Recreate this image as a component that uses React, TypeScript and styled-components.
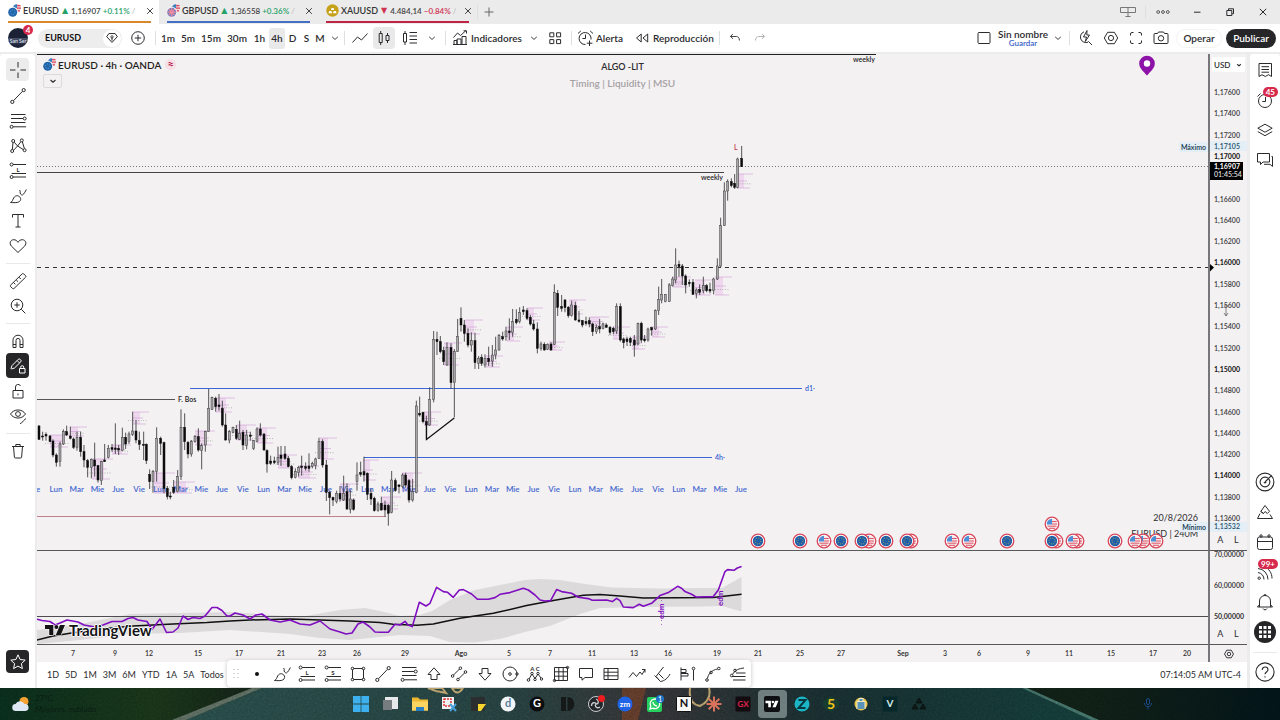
import React from 'react';
import styled, { createGlobalStyle, css } from 'styled-components';

const ui = `Lato, 'Open Sans', sans-serif`;
const ink = '#2b2b2e';

const Global = createGlobalStyle`
  *, *::before, *::after { box-sizing: border-box; }
  html, body, #root { margin: 0; height: 100%; }
  body { font-family: ${ui}; font-size: 10px; line-height: 12px; color: ${ink}; background: #f4f1f2; overflow: hidden; }
  button, select { font: inherit; color: inherit; border: 0; background: none; padding: 0; margin: 0; cursor: pointer; }
  svg { display: block; flex: none; }
  svg text { font-family: ${ui}; }
`;

/* ---------- icons: 18px grid, one-pixel strokes ---------- */

const o = (x: number, y: number, r: number) =>
  `M${x - r} ${y}a${r} ${r} 0 1 0 ${r * 2} 0a${r} ${r} 0 1 0 ${-r * 2} 0`;

const paths: Record<string, string> = {
  cross: 'M9 1v5.5M9 11.5V17M1 9h5.5M11.5 9H17',
  trend: `M4.5 13.7 13.5 4.3${o(3.3, 14.9, 1.6)}${o(14.7, 3.1, 1.6)}`,
  fib: `M2 2.5h14.500M2 6.500h12M2 10.500h14.500M4.200 14.800H17${o(15.7, 6.5, 1.5)}${o(2.6, 14.8, 1.5)}`,
  xabcd: `M3.300 12.500 4 5.500M5.200 5.200 8.600 9 11.800 4.800M13.400 5l2 6.600M4.700 13 8.600 9l5.800 3.600${o(4.2, 4, 1.5)}${o(12.8, 3.4, 1.5)}${o(3.2, 14, 1.5)}${o(15.6, 13.2, 1.5)}`,
  posFrame: `M4.200 2.500H17M2.600 11.500H17M4.200 15H17${o(2.6, 2.5, 1.5)}${o(2.6, 15, 1.5)}`,
  brush: 'M1.500 15.500c2-.7 2.300-3 3.300-4.800C6 8.700 8.700 8 10.500 9.700s1.400 4.100-.6 5.200c-1.900 1-5.400.8-8.400.6zM11.200 4.500c-.4 2 .6 3.600 2.300 3.400C15.200 7 16.300 4.500 17.300 2.500M11.200 4.500l-.5-1.500',
  text: 'M3.500 5.500v-3h11v3M9 2.500v12.500M6.500 15h5',
  heart: 'M9 15.500 2.300 9C-.2 6.300 1.600 2.700 4.700 2.700c1.900 0 3.400 1 4.300 2.700.9-1.700 2.400-2.700 4.300-2.700 3.100 0 4.900 3.600 2.400 6.300z',
  ruler: 'm1.500 13.200 11.700-11.400a1 1 0 0 1 1.400 0l2 2a1 1 0 0 1 0 1.400L5 16.500a1 1 0 0 1-1.400 0l-2.100-2a1 1 0 0 1 0-1.300zM4.500 10.500l1.800 1.800M7.200 7.900l1.800 1.800M10 5.200l1.800 1.800',
  zoom: `${o(8, 8, 5.8)}M12.300 12.300l4 4M5.300 8h5.400M8 5.300v5.400`,
  magnet: 'M4 15.500V8.200a5 5 0 0 1 10 0v7.300h-3V8.400a2 2 0 0 0-4 0v7.100zM4 12.500h3M11 12.500h3',
  pencilLock: 'M2 11.500 3 8.600 9.300 2.300a1.300 1.300 0 0 1 1.800 0l.7.700a1.300 1.300 0 0 1 0 1.800L5.500 11l-3 1zM10.500 11.500h5.500v4.500h-5.500zM11.700 11.500v-1.300a1.500 1.500 0 0 1 3 0v1.300M8.200 3.600l2.400 2.400',
  unlock: 'M4 8.500h10v7.500H4zM6.500 8.500V5a2.600 2.600 0 0 1 5-1M9 11.500v1.800',
  eye: `M1.500 7C5 1.600 13 1.600 16.500 7 13 12.400 5 12.400 1.500 7z${o(9, 7, 2.4)}M11 16.500c2.500 0 2-2.500 3.500-2.500M14.500 13.700l2.500-2.200`,
  trash: 'M3 4.500h12M6.800 4.500V2.500h4.400v2M4.500 4.500l.9 10.600a1 1 0 0 0 1 .9h5.200a1 1 0 0 0 1-.9l.9-10.600',
  star: 'm9 1.800 2.100 4.700 5.100.6-3.800 3.500 1 5L9 13.100l-4.400 2.500 1-5L1.800 7.100l5.100-.6z',
  chev: 'm5.800 7.700 3.200 2.900 3.200-2.900',
  plusCircle: `${o(9, 9, 6.3)}M9 5.800v6.400M5.800 9h6.400`,
  plus: 'M9 4.500v9M4.500 9h9',
  close: 'm5.800 5.800 6.400 6.400M12.200 5.800l-6.400 6.400',
  line: 'M1.500 13.500 6.500 8l4 3L16.500 4.500',
  candles: 'M4.200 4.500h3v9h-3zM5.700 2v2.500M5.700 13.500V16M11 6.500h3v5h-3zM12.500 4v2.500M12.500 11.500V14',
  candleList: 'M2.500 4.500h3v8.500h-3zM4 2v2.500M4 13v3M8.500 3.500h7.500M8.500 7h7.500M8.500 10.500h7.500M8.500 14h7.500',
  indicators: 'M3 15.500v-4h3v4M6 15.500v-5.500h4v5.500M11 15.500v-8h4v8M2 15.500h14M2.500 8.500l4-4.500 3 2.500 5.500-5M12.500 1.800h3v2.700',
  grid4: 'M3.800 3.800h4v4h-4zM10.600 3.800h4v4h-4zM3.800 10.600h4v4h-4zM10.600 10.600h4v4h-4z',
  alarm: 'M9.500 15.500a6 6 0 1 1 5.500-5M9.500 5.500v4h-3M2 4.500 4.800 2M17 4.500 14.200 2M13.500 11.500v5.500M10.800 14.200h5.600',
  rewind: 'M8.200 5v8L3.500 9zM14.700 5v8L10 9z',
  undo: 'M6.500 4.500 4 7.300l2.800 2.700M4 7.300h6.500c2 0 3.500 1.500 3.500 4.500',
  redo: 'M11.500 4.500 14 7.300l-2.800 2.700M14 7.300H7.500c-2 0-3.500 1.500-3.500 4.500',
  square: 'M4 3.500h10a1 1 0 0 1 1 1v9a1 1 0 0 1-1 1H4a1 1 0 0 1-1-1v-9a1 1 0 0 1 1-1z',
  search: 'M12 13.200a5.500 5.500 0 1 1-4-10.400M12.300 12.300l3.700 3.700M11 1.500 7.500 8h3l-1.200 4.500L13.500 6H10.800z',
  hexGear: `M5.600 3.300h6.800L15.700 9l-3.300 5.700H5.600L2.300 9z${o(9, 9, 2.6)}`,
  full: 'M3.500 6.500V5a1.500 1.500 0 0 1 1.500-1.500h1.500M11.500 3.500H13A1.500 1.500 0 0 1 14.500 5v1.500M14.500 11.500V13a1.500 1.500 0 0 1-1.500 1.500h-1.500M6.500 14.500H5A1.500 1.500 0 0 1 3.500 13v-1.500',
  camera: `M3 4.500h2.500l1-1.500h5l1 1.500H15a1 1 0 0 1 1 1v8a1 1 0 0 1-1 1H3a1 1 0 0 1-1-1v-8a1 1 0 0 1 1-1z${o(9, 9.3, 2.7)}`,
  gem: 'M5.500 4h7L15 7.500 9 14 3 7.500zM9 6.200l1.500 1.600L9 9.400 7.500 7.800zM9 9v3',
  panels: 'M1.500 4.500h15v5h-15zM9 4.500v9M6.500 13.500h5',
  dots3: `${o(4.2, 9, 1.4)}${o(9, 9, 1.4)}${o(13.8, 9, 1.4)}`,
  minus: 'M6 9.200h6.500',
  restore: 'M5.800 7.500h5v5h-5zM7.500 7.200V5.800h5v5h-1.400',
  bookList: 'M3 2.500h12.500v13l-3-1.800-3.200 1.800-3.300-1.800-3 1.800zM5.500 5.700h7.500M5.500 8.500h7.500M5.500 11.200h7.500',
  clock: `${o(9, 10, 6.5)}M9.500 6v4.500H6.300M1.500 5.500 4.500 2.500`,
  layers: 'M9 3.200 16.200 7.200 9 11.200 1.800 7.200zM1.800 10.600 9 14.700l7.200-4.100',
  chat: 'M1.500 2.500h12v8.500H7l-2.500 2.500V11h-3zM15.500 5.500h1v10l-2.500-2.200H8',
  radar: `${o(9, 9, 8)}${o(9, 9, 4.4)}M9 9l5.500-5.500M8.200 9a.8.8 0 1 0 1.600 0`,
  idea: 'M4.800 8.500 9 2.500l4.500 5.800-2.200 2.200L9 8.500l-1.500 2zM4 10.500 1.500 15.500h15L14 11.500M4.800 8.500l2.700 2',
  calendar: `M3.500 4h11a2 2 0 0 1 2 2v8.500a2 2 0 0 1-2 2h-11a2 2 0 0 1-2-2V6a2 2 0 0 1 2-2zM1.500 8.500h15${o(5, 3, 1.2)}${o(13, 3, 1.2)}`,
  feed: `M2 9.500a7 7 0 0 1 6 7M2 5.500a11 11 0 0 1 10 11M8 3.500c5 2 8 6.500 8 12${o(3.2, 15.2, 1.2)}`,
  bell: 'M1.500 14h15M3.500 14V8a5.500 5.500 0 0 1 11 0v6M1.500 14l2-2.500M16.500 14l-2-2.500M7 15.500c.8 1.800 3.200 1.800 4 0M8 2.500c0-1.500 2-1.500 2 0',
  help: `${o(9, 9, 8.2)}M6.500 7.200C6.500 3.500 11.700 3.800 11.700 7c0 2-2.700 2-2.700 4M9 12.800v1.200`,
  rect: `M4.500 3.500h9M4.500 14.500h9M3.500 4.500v9M14.500 4.500v9${o(3.5, 3.5, 1.3)}${o(14.5, 3.5, 1.3)}${o(3.5, 14.5, 1.3)}${o(14.5, 14.5, 1.3)}`,
  up: 'm9 2.800 6 6.700h-3v5H6v-5H3z',
  down: 'm9 15.200 6-6.700h-3v-5H6v5H3z',
  parallel: `M3.500 10 9.500 4M9 13.500 14.500 8${o(2.6, 11, 1.3)}${o(10.4, 3.2, 1.3)}${o(8, 14.500, 1.3)}${o(15.5, 7, 1.3)}`,
  circle: `${o(9, 9, 7)}${o(9, 9, 1.3)}${o(16, 9, 1.2)}`,
  abc: `M3 14 6 9l3 4.500L12 9l3 4${o(2.5, 15, 1.3)}${o(6, 8.5, 1.200)}${o(9, 14.500, 1.2)}${o(12, 8.5, 1.2)}${o(15.500, 14, 1.200)}`,
  gridBox: `M2.500 2.500h13v13h-13zM6.800 2.500v13M11.200 2.500v13M2.500 6.800h13M2.500 11.200h13${o(2.5, 15.5, 1.2)}${o(15.5, 2.5, 1.2)}`,
  comment: 'M2.500 3.500h13v9H8l-3 2.700v-2.700H2.500z',
  table: 'M2 3.500h14v11H2zM6 3.500v11M2 7.200h14M2 10.800h14',
  zig: 'M1 12.500 5 7.500l3.500 4L12 7l2 2.500L17 4.500M14 4.500h3v3',
  fan: 'M3 11.500 10.500 2M1.500 10.500l6 6c4-.5 7.500-3.500 9.500-7.500M5.500 8.500l5 5M3 11.500l3.500 4',
  profile: `M2 2.500v13M2 4.500h5v3H2M2 8.500h7v2.500H2M14.500 5v10.500${o(14.5, 3.5, 1.3)}`,
  curve: `M3.500 13.500C4 9 8 5 13.500 4${o(3, 15, 1.3)}${o(14.800, 3.500, 1.3)}${o(7, 7.5, 1.3)}`,
  pitch: `M3.500 9.500C6 5 10 3.500 15 3M3 11.500h13.500M4 15h12.500M7 8h9.500${o(2.7, 10.500, 1.3)}${o(6, 5.5, 1.300)}`,
};

type GlyphProps = { name: string; size?: number; w?: number; letter?: string; letterY?: number };
const Glyph = ({ name, size = 18, w = 1, letter, letterY = 9.5 }: GlyphProps) => (
  <svg width={size} height={size} viewBox="0 0 18 18" fill="none" stroke="currentColor" strokeWidth={w} strokeLinejoin="round" aria-hidden="true">
    <path d={paths[name]} />
    {letter && (
      <text x="9" y={letterY} fontSize="6" fontWeight="700" textAnchor="middle" fill="currentColor" stroke="none">{letter}</text>
    )}
  </svg>
);

const Flag = ({ kind }: { kind: 'eu' | 'gb' | 'xau' }) => (
  <svg width="13" height="13" viewBox="0 0 13 13" aria-hidden="true">
    {kind === 'xau' ? (
      <>
        <circle cx="6.500" cy="6.500" r="6.200" fill="#c6a21c" />
        <path d="M5 6l.6-2h2l.6 2zM2.500 9.300l.7-2.300h2.200l.7 2.300zM7 9.300 7.700 7h2.200l.7 2.300z" fill="#fff" />
      </>
    ) : (
      <>
        <circle cx="9" cy="4" r="3.900" fill="#f3d4da" />
        <path d="M8.500 1.600h4M8.500 4.200h4.500M9 6.800h3" stroke="#d94a5e" strokeWidth="1.200" />
        <path d="M9 .2A3.900 3.900 0 0 0 5.100 4H9z" fill="#3b82c4" />
        <circle cx="4.900" cy="8" r="5" fill="#fff" />
        <circle cx="4.700" cy="8.200" r="4.500" fill={kind === 'eu' ? '#2166ac' : '#6d7fc2'} />
        {kind === 'eu' ? (
          <circle cx="4.700" cy="8.200" r="2.300" fill="none" stroke="#5fa3cf" strokeDasharray="1 1.200" />
        ) : (
          <path d="M4.700 3.700v9M.2 8.200h9M1.700 5.200l6 6M7.700 5.200l-6 6" stroke="#f08a9c" strokeWidth="1.200" />
        )}
      </>
    )}
  </svg>
);

/* ---------- window frame ---------- */

const Page = styled.div`display: flex; flex-direction: column; height: 100vh; min-height: 640px;`;

const TabStrip = styled.header`display: flex; align-items: stretch; height: 24px; background: #ebebeb; flex: none;`;
const Tab = styled.div<{ $active?: boolean }>`
  width: 159px; padding: 0 8px; display: flex; background: ${p => (p.$active ? '#fff' : 'transparent')};
`;
const TabInner = styled.div<{ $line: string }>`
  flex: 1; min-width: 0; display: flex; align-items: center; gap: 2px; border-bottom: 2px solid ${p => p.$line}; margin-bottom: 1px;
`;
const TabName = styled.a`color: #333; text-decoration: none; font-weight: 600; white-space: nowrap; font-size: 9px;`;
const Quote = styled.span<{ $c: string }>`color: ${p => p.$c}; font-weight: 600; white-space: nowrap; font-size: 8px;`;
const Arrow = styled.span<{ $c: string }>`color: ${p => p.$c}; font-size: 8px; font-family: 'DejaVu Sans', sans-serif; padding: 0 1px;`;
const IconButton = styled.button<{ $w: number; $h?: number; $bg?: string; $c?: string }>`
  flex: none; width: ${p => p.$w}px; height: ${p => p.$h ?? 24}px; display: flex; align-items: center; justify-content: center;
  color: ${p => p.$c ?? 'inherit'}; border-radius: 4px; background: ${p => p.$bg ?? 'transparent'};
`;
const TabClose = styled(IconButton)`margin-left: auto; margin-right: -7px;`;
const Spacer = styled.div`flex: 1;`;
const Divider = styled.div<{ $m?: number }>`width: 1px; height: 14px; background: #dfdfe2; margin: 0 ${p => p.$m ?? 0}px; flex: none; align-self: center;`;

const Toolbar = styled.nav`display: flex; align-items: center; height: 28px; background: #fff; flex: none; font-weight: 600; padding-right: 4px;`;
const Avatar = styled.button`
  position: relative; width: 20px; height: 20px; margin: 0 10px 0 8px; border-radius: 10px; flex: none;
  background: linear-gradient(#1c2236 50%, #4a5068 52%, #1a2036 90%); color: #dfe3f2; font-size: 5px; line-height: 8px; padding-top: 5px; white-space: nowrap;
`;
const Badge = styled.span<{ $wide?: boolean }>`
  position: absolute; top: ${p => (p.$wide ? 2 : -3)}px; right: ${p => (p.$wide ? 2 : -5)}px; min-width: 10px; height: 10px; padding: 0 ${p => (p.$wide ? 3 : 2)}px;
  border-radius: 5px; background: #d6294b; color: #fff; font-size: 8px; line-height: 10px; font-weight: 700; text-align: center;
`;
const Symbol = styled.button`
  width: 84px; height: 19px; border-radius: 10px; background: #ededee; display: flex; align-items: center; justify-content: space-between;
  padding: 0 0 0 7px; font-weight: 700; font-size: 9px; color: #111; flex: none;
`;
const Gem = styled.span`width: 18px; height: 17px; margin-right: 1px; border-radius: 9px; background: #fff; display: flex; justify-content: center; align-items: center;`;
const Interval = styled.button<{ $w: number; $on?: boolean }>`
  width: ${p => p.$w}px; height: 21px; border-radius: 3px; flex: none; text-align: center; white-space: nowrap;
  background: ${p => (p.$on ? '#e9e9ea' : 'transparent')};
`;
const Labelled = styled.button<{ $w: number }>`width: ${p => p.$w}px; flex: none; display: flex; align-items: center; gap: 2px; white-space: nowrap;`;
const LayoutName = styled.button`width: 50px; line-height: 10px; flex: none; font-weight: 600; margin-left: 4px; white-space: nowrap;`;
const Save = styled.span`display: block; color: #3a63c8; font-size: 8px; line-height: 8px;`;
const Pill = styled.button<{ $dark?: boolean }>`
  height: 19px; border-radius: 10px; width: ${p => (p.$dark ? 50 : 46)}px; margin-left: ${p => (p.$dark ? 4 : 3)}px; flex: none; font-weight: 600; text-align: center;
  ${p => p.$dark ? css`background: #262629; color: #fff;` : css`background: #fff; border: 1px solid #f3f3f3;`}
`;

const Body = styled.div`flex: 1; display: flex; min-height: 0; background: #ececee; padding-top: 2px;`;
const Rail = styled.aside<{ $side: 'left' | 'right' }>`
  width: ${p => (p.$side === 'left' ? 35 : 30)}px; flex: none; background: #fff; display: flex; flex-direction: column; align-items: center;
  padding: ${p => (p.$side === 'left' ? '4px 0 15px' : '1px 0 1px')};
  border-radius: 3px 3px 0 0;
`;
const RailRule = styled.hr`width: 24px; height: 1px; margin: 5px 0 4px; border: 0; background: #e8e8ea; flex: none;`;
const Cursor = styled(IconButton)`margin-bottom: 2px;`;
const RailItem = styled.button`position: relative; width: 30px; height: 30px; flex: none; display: flex; align-items: center; justify-content: center;`;
const Apps = styled.span`width: 22px; height: 22px; border-radius: 11px; background: #262629; color: #fff; display: flex; align-items: center; justify-content: center;`;

/* ---------- chart ---------- */

const Centre = styled.main`flex: 1; min-width: 0; display: flex; flex-direction: column; margin: 0 3px 0 2px;`;
const ChartGrid = styled.section`
  position: relative; flex: 1; min-height: 0; display: grid; background: #f4f1f2;
  grid-template-columns: minmax(0, 1fr) 39px; grid-template-rows: minmax(0, 1fr) 94px 17px;
`;
const Cell = styled.div<{ $axis?: boolean; $rule?: boolean }>`
  position: relative; overflow: hidden; min-height: 0;
  ${p => p.$axis && css`border-left: 2px solid #77767a;`}
  ${p => p.$rule && css`border-bottom: 1px solid #58575b;`}
`;
const Plot = styled.svg`width: 100%; height: 100%;`;
const Legend = styled.div`position: absolute; left: 6px; top: 4px; font-size: 10px; font-weight: 600; display: flex; gap: 2px; align-items: center; color: #1e1e20;`;
const Approx = styled.span`background: #f6dfe5; color: #b3274f; border-radius: 5px; width: 11px; height: 11px; line-height: 10px; text-align: center; margin-left: 2px; font-size: 11px; font-weight: 700;`;
const Fold = styled.button`position: absolute; left: 6px; top: 20px; width: 19px; height: 14px; border: 1px solid #dddadc; border-radius: 2px; display: flex; align-items: center; justify-content: center;`;
const Banner = styled.div`position: absolute; top: 7px; left: 0; right: 0; text-align: center; font-weight: 600; font-size: 9px; line-height: 12px; pointer-events: none;`;
const BannerSub = styled.div`color: #a5a2a5; margin-top: 4px; font-size: 10px;`;
const Stamp = styled.div`position: absolute; right: 10px; bottom: 8px; text-align: right; line-height: 16px; font-size: 9px; color: #2f2f33;`;
const Extreme = styled.span<{ $bottom?: boolean }>`
  position: absolute; right: 0; ${p => (p.$bottom ? 'bottom: 18px;' : 'top: 88px;')} background: #e3eef6; color: #14384e;
  font-size: 7px; line-height: 10px; font-weight: 600; padding: 0 2px;
`;
const Currency = styled.select`
  position: absolute; left: 2px; top: 3px; width: 33px; height: 15px; background: #fff; appearance: none; padding-left: 2px; font-size: 8px; font-weight: 600; z-index: 1;
`;
const CurrencyChev = styled.span`position: absolute; left: 24px; top: 6px; z-index: 2; pointer-events: none;`;
const ScaleMode = styled.div`position: absolute; left: 2px; right: 3px; bottom: 4px; display: flex; justify-content: space-around; font-size: 9px;`;
const Brand = styled.div`position: absolute; left: 8px; bottom: 4px; display: flex; align-items: center; gap: 4px; font-size: 15px; line-height: 18px; font-weight: 700; color: #141416;
  text-shadow: 1px 0 #fff, -1px 0 #fff, 0 1px #fff, 0 -1px #fff;`;
const AxisGear = styled.button`position: absolute; inset: 0; display: flex; align-items: center; justify-content: center;`;
const Overlay = styled.div`position: absolute; inset: 0; pointer-events: none;`;

type Candle = [number, number, number, number, number, number];
/* x, high, body top, body bottom, low, rising — thirds of a pixel from each block's origin */
const blocks: { x: number; y: number; c: Candle[] }[] = [
  { x: 30, y: 380, c: [
    [27,135,138,178,180,0],[38,155,168,171,182,0],[48,157,163,168,182,0],[60,165,168,185,187,0],[69,178,183,225,232,0],[79,220,225,247,260,0],
    [90,185,192,245,260,1],[100,148,155,192,195,1],[110,137,155,165,168,0],[121,140,168,175,178,0],[131,172,177,202,207,0],[141,155,172,202,212,1],
    [152,155,172,215,230,0],[162,195,215,240,262,0],[173,237,242,262,292,0],[184,235,238,262,295,1],[194,188,240,258,290,0],[204,255,257,300,308,0],
    [214,242,245,302,315,1],[224,192,240,245,246,0],[235,195,205,232,235,1],[246,192,203,208,215,0],[256,130,204,208,222,0],[266,195,205,210,225,0],
    [277,143,172,212,213,1],[287,158,172,192,207,0],[297,155,162,185,192,1],[308,95,153,163,168,1],[318,120,153,180,190,0],[328,155,182,193,210,0],
    [341,155,193,196,240,0],[349,190,193,242,252,0],[359,268,283,305,327,0],[369,270,275,305,338,1],[380,142,175,275,305,1],[392,170,175,190,225,0],
    [402,185,188,325,340,0],[412,318,325,350,358,0],[421,335,348,351,358,0],[431,300,322,337,342,0],[443,270,290,335,337,1],[453,88,142,290,300,1],
    [464,100,142,185,210,0],[474,183,187,222,235,0],[484,180,185,222,230,1],[495,165,170,185,188,1],[505,145,170,210,215,0],[515,190,197,212,268,1],
    [526,152,155,195,215,1],[536,27,85,155,156,1],[546,50,52,88,90,1],[557,50,55,80,95,0],[567,42,75,80,92,0],[577,62,85,135,140,0],
    [587,100,135,180,182,0],[598,150,155,180,190,1],[609,140,142,157,160,1],[619,135,148,175,180,0],[629,122,160,178,180,1],[639,150,157,195,210,0],
    [650,150,165,197,208,1],[661,155,165,169,182,0],[671,180,182,205,210,1],[681,142,147,185,187,1],[691,130,147,165,170,0],[702,160,162,210,212,0],
    [711,208,212,252,278,0],[722,227,243,250,255,0],[733,230,243,248,252,0],[744,200,233,248,255,1],[753,198,225,235,258,0]] },
  { x: 200, y: 300, c: [
    [255,438,462,475,480,0],[265,468,475,500,502,0],[275,495,500,533,538,0],[286,505,515,532,535,1],[296,498,503,518,530,1],[305,467,498,503,527,0],
    [317,487,500,505,512,0],[327,460,498,505,515,0],[337,485,490,500,505,1],[347,473,477,497,508,1],[357,413,425,475,477,1],[368,418,425,495,503,0],
    [379,480,495,577,603,0],[389,572,577,593,643,0],[399,590,592,600,618,0],[410,572,580,605,610,1],[420,558,580,597,605,0],[431,527,580,600,603,1],
    [441,550,575,627,630,0],[451,570,597,628,640,1],[461,595,600,628,632,0],[471,487,525,545,572,1],[482,485,518,523,530,0],[492,470,515,525,545,0],
    [502,517,520,583,600,0],[513,567,580,597,615,0],[523,590,595,632,635,0],[534,605,612,632,635,1],[544,590,610,630,632,0],[555,602,615,630,650,0],
    [565,612,617,640,677,0],[575,513,540,638,640,1],[586,535,542,572,575,0],[597,552,555,560,580,0],[608,520,525,560,565,1],[617,518,525,555,563,0],
    [627,537,542,600,608,0],[638,537,575,600,605,1],[649,302,318,578,580,1],[659,290,340,345,350,0],[669,335,337,365,370,0],[679,347,365,375,418,0],
    [689,262,298,375,378,1],[701,93,118,298,307,1],[711,95,118,125,165,0],[721,108,125,155,160,0],[731,140,152,185,195,0],[741,127,142,195,197,1],
    [753,130,142,248,267,0],[763,147,155,248,352,1],[773,57,110,155,156,1],[783,22,55,75,95,0],[793,60,75,100,125,0],[804,85,100,135,142,0],
    [814,97,122,135,155,1],[825,98,122,188,207,0],[836,168,175,190,207,1]] },
  { x: 480, y: 140, c: [
    [5,643,652,670,678,0],[15,643,655,675,683,1],[26,620,655,665,678,0],[37,615,645,663,680,1],[47,590,630,645,658,1],[57,582,587,630,632,1],
    [68,575,590,597,602,0],[78,560,573,590,602,1],[88,535,573,578,600,0],[98,507,545,578,590,1],[109,508,538,548,553,0],[119,502,518,545,550,1],
    [130,498,510,515,525,0],[141,505,512,535,540,0],[151,525,532,552,557,0],[161,540,552,567,572,0],[172,547,567,625,640,0],[183,605,612,625,632,1],
    [193,607,613,630,632,0],[203,610,613,628,630,1],[213,607,612,630,632,0],[223,433,458,613,615,1],[233,450,460,502,528,0],[245,465,500,505,515,0],
    [255,477,480,503,517,0],[265,498,502,527,533,0],[275,482,495,527,530,1],[286,485,497,540,542,0],[297,513,540,544,548,0],[307,540,542,555,562,0],
    [318,530,545,550,557,0],[328,532,542,552,562,0],[338,548,552,575,588,0],[349,553,562,575,582,1],[359,537,560,567,580,0],[369,548,552,565,568,1],
    [379,550,555,562,563,0],[390,558,562,577,585,0],[400,560,565,575,583,0],[410,490,500,573,582,1],[421,490,500,600,605,0],[431,592,597,608,625,0],
    [441,590,597,605,617,0],[451,590,595,607,618,0],[463,585,600,615,650,0],[474,548,550,612,615,1],[484,545,550,600,608,0],[494,585,597,602,607,0],
    [504,563,567,600,605,1],[515,560,563,570,587,0],[526,508,512,567,570,1],[536,440,478,512,525,1],[545,417,463,480,490,1],[556,462,464,485,487,1],
    [568,430,435,485,486,1],[578,410,417,437,440,1],[587,325,375,420,430,1],[597,362,373,380,410,0],[607,372,378,408,435,0],[617,403,408,435,460,0],
    [628,418,427,431,440,0],[639,417,427,463,465,0],[649,445,450,460,475,1],[659,433,448,457,465,0],[670,410,437,452,460,1],[680,432,437,452,457,0],
    [690,428,448,453,460,0],[701,413,417,452,463,1],[712,355,378,417,420,1],[722,233,257,378,382,1],[733,127,153,257,258,1],[743,118,125,153,182,1],
    [754,115,125,137,142,0],[764,102,130,142,147,0],[773,53,57,142,145,1],[785,18,55,80,81,0]] },
];

const sessions = [
  [50,435,12,12],[70,427,8,9],[92,459,12,20],[112,445,10,9],[133,412,7,12],[154,473,12,20],[174,482,12,11],[195,431,11,14],[216,398,10,14],
  [237,425,10,15],[257,428,10,15],[278,455,10,13],[298,466,12,12],[320,438,8,21],[340,484,10,16],[363,460,7,20],[382,497,10,12],[402,473,11,18],
  [424,412,8,13],[444,343,9,22],[465,320,9,14],[486,356,8,11],[507,327,7,14],[527,308,7,12],[549,342,7,8],[569,300,8,14],[590,317,10,9],
  [613,327,8,12],[632,337,7,12],[652,327,7,10],[673,277,9,10],[695,280,10,15],[715,277,8,18],[737,174,7,14],
];

const week = ['Lun', 'Mar', 'Mie', 'Jue', 'Vie'];
const days = Array.from({ length: 34 }, (_, i) => ({ x: 56 + i * 20.76, d: week[i % 5] }));

type Ev = [number, number, 'eu' | 'us'];
const events: Ev[] = [
  [758,541,'eu'],[800,541,'eu'],[824,541,'us'],[841,541,'eu'],[869,541,'us'],[862,541,'eu'],[886,541,'eu'],[911,541,'us'],[907,541,'eu'],
  [952,541,'us'],[969,541,'us'],[1007,541,'eu'],[1052,524,'us'],[1056,541,'us'],[1052,541,'eu'],[1077,541,'us'],[1073,541,'us'],[1115,541,'eu'],
  [1143,541,'us'],[1135,541,'us'],[1156,541,'us'],
];

const EventMark = ({ e: [x, y, k] }: { e: Ev }) => (
  <g transform={`translate(${x} ${y})`}>
    <circle r="6.800" fill="#fff" stroke="#d8475a" strokeWidth="1.300" />
    {k === 'eu' ? (
      <>
        <circle r="5.200" fill="#1f5fa8" />
        <circle r="3" fill="none" stroke="#b9b45a" strokeWidth=".9" strokeDasharray="1 1.350" />
      </>
    ) : (
      <>
        <circle r="5.200" fill="#f6e7ea" />
        <path d="M-4.500 2.200h9M-3 4.300h6M0-2.500h4.700M0 0h5.200" stroke="#dd5566" strokeWidth="1" />
        <path d="M0-5.200A5.200 5.200 0 0 0-5.200.4H0z" fill="#4b8fd6" />
      </>
    )}
  </g>
);

const PricePane = () => (
  <Plot aria-label="EURUSD 4h">
    <g transform="translate(-37 -54)">
      <g shapeRendering="crispEdges">
        <path d="M37 54.500H876" stroke="#222" />
        <path d="M37 172.500H724" stroke="#444" />
        <path d="M37 166.500H4000" stroke="#777" strokeDasharray="1 2" />
        <path d="M37 267.500H4000" stroke="#333" strokeDasharray="4 4" />
        <path d="M37 399.500H175" stroke="#555" />
        <path d="M190 388.500H802M364 457.500H712" stroke="#3b66d6" />
        <path d="M37 516.500H386" stroke="#c0808e" />
      </g>
      {sessions.map(([x, y, w, h]) => (
        <g key={x} stroke="#c58bd0" strokeWidth=".7">
          <rect x={x} y={y} width={w} height={h} fill="#dfa6e6" fillOpacity=".34" stroke="none" />
          <path d={`M${x} ${y}h${w + 9}M${x} ${y + h / 2}h${w + 3}M${x} ${y + h}h${w + 6}`} opacity=".7" />
          <path d={`M${x - 5} ${y + h * 0.7}h${w + 12}`} stroke="#777" strokeDasharray="1 1.500" opacity=".7" />
        </g>
      ))}
      {days.map(d => (
        <text key={d.x} x={d.x} y="492" fontSize="8" fontWeight="600" fill="#4468d0" textAnchor="middle">{d.d}</text>
      ))}
      <text x="36" y="492" fontSize="8" fontWeight="600" fill="#4468d0">e</text>
      {blocks.map(b => (
        <g key={b.x} transform={`translate(${b.x} ${b.y}) scale(.33333)`}>
          {b.c.map(([x, hi, t, bt, lo, up]) => (
            <g key={x}>
              <path d={`M${x} ${hi}V${lo}`} stroke="#333336" strokeWidth="2.500" />
              <rect x={x - 3} y={t} width="6" height={Math.max(bt - t, 3)} fill={up ? '#a9a6a9' : '#0b0b0c'} stroke={up ? '#3a3a3d' : '#111'} strokeWidth="1.500" />
            </g>
          ))}
        </g>
      ))}
      <path d="M426.500 425v14.500L454.300 418" fill="none" stroke="#111" strokeWidth="1.300" />
      <g fontSize="7" fill="#222" fontWeight="600">
        <text x="853" y="62">weekly</text>
        <text x="701" y="180">weekly</text>
        <text x="178" y="402">F. Bos</text>
        <text x="805" y="391" fill="#3b66d6">d1·</text>
        <text x="715" y="460" fill="#3b66d6">4h·</text>
        <text x="734" y="150" fill="#c43c55">L</text>
      </g>
      <path d="M1147 75.500c-4-4.500-7.800-7.500-7.800-12a7.800 7.800 0 0 1 15.600 0c0 4.500-3.800 7.500-7.800 12z" fill="#8c12a8" />
      <circle cx="1147" cy="63.500" r="3.200" fill="#fff" />
    </g>
  </Plot>
);

const EventLayer = () => (
  <Plot aria-hidden="true">
    <g transform="translate(-37 -54)">{events.map((e, i) => <EventMark key={i} e={e} />)}</g>
  </Plot>
);

const prices = Array.from({ length: 21 }, (_, i) => ({ p: 17600 - i * 200, y: 95 + i * 21.3 })).filter(t => t.p !== 16800);
const PriceAxis = () => (
  <Plot aria-label="Precio">
    <g transform="translate(-1210 -54)" fontSize="7" fontWeight="600" fill="#333">
      <rect x="1210" y="141" width="37" height="10" fill="#e3eef6" />
      <rect x="1210" y="522" width="37" height="10" fill="#e3eef6" />
      {prices.map(({ p, y }) => (
        <text key={p} x="1214" y={y} fontWeight={p % 1000 ? 600 : 700} fill={p % 1000 ? '#3a3a3e' : '#111'}>{`1,${p}`}</text>
      ))}
      <text x="1214" y="148.500" fill="#24506c">1,17105</text>
      <text x="1214" y="529" fill="#24506c">1,13532</text>
      <rect x="1209" y="162" width="34" height="18" fill="#000" />
      <text x="1214" y="169" fill="#fff" fontWeight="700">1,16907</text>
      <text x="1214" y="177" fill="#ddd">01:45:54</text>
      <path d="M1210 264l4 3.500-4 4z" fill="#000" />
      <path d="M1226 304v12M1224 307l2-3 2 3M1224 313l2 3 2-3" fill="none" stroke="#666" strokeWidth=".8" />
    </g>
  </Plot>
);

const rsi =
  'M37 619.300 42 620.500 50 621.500 55 625 60 623 67 620 78 622 84 625 95 627 103 625 112 621.500 122 621.500 128 618.500 133 617.500 138 620 147 621.500 152 629.500 160 619 166.500 632.500 173 632 178 628 183 616 188 619.500 193 617.500 200 618.500 205 616 212 607.500 217 607.500 222 610.500 227 616 230 616 235 613 243 615 250 619 256 615 262 614 270 620 280 622 290 620 300 624 310 625 320 621 330 629 340 632 346 634 352 633 358 624 363 622 370 627 375 632 380 632.300 388.300 632.300 395 624.300 400 625 405 621.300 408 625 412.300 626.600 419.300 602.300 426 606 430 603.300 436.600 587.300 443.300 591.600 447.600 592.300 453.300 597.300 459.300 590 463.300 589.600 471.600 594 477.600 599.300 488.300 599.300 495 597.600 500 594.300 510 592.600 523.300 588.300 528.300 590 535 595 540 600 545 601 550.600 600.600 556.600 589.600 561.600 591.600 571.600 593.300 578.300 597.300 588.300 598.600 592.300 600.300 606.600 600 612.300 601.600 616.600 598.300 620 600.600 623.300 607 633.300 607.600 639.300 604.300 643.300 606.300 651.600 603.300 660 595.600 668.300 592.600 677.600 586.300 681.600 588.300 685 591.600 691.600 594.300 696 597 713.300 596.600 718.300 590 725 571.600 727.600 569.600 734 570.300 737.300 568 741.600 566.600';

const Oscillator = () => (
  <Plot aria-label="RSI">
    <g transform="translate(-37 -551)">
      <path
        d="M37 630 80 624 130 614 180 613 230 612 300 617 340 610 365 608 380 611 400 616 420 615 432 611 450 600 475 590 500 585 525 580 540 579 560 580 585 584 612 587.500 660 588.500 700 588 722 588 741.500 577V611.500L722 606 700 606.500 640 607 600 608 580 614 550 626 525 632 500 639 475 642.500 450 642 430 636 400 635 350 640 320 638 290 634 230 630 180 633 130 634 80 640 37 644z"
        fill="#dcdadb"
      />
      <path d="M37 616.500H4000" stroke="#4d4c50" shapeRendering="crispEdges" />
      <path d="M37 640 53 636 70 633.300 100 629 133 626 173 624 207 622.600 230 621 250 620 290 619 320 620 350 621 380 622.600 393 624.300 416.600 625.300 433.300 624 460 618.300 493.300 613.300 526.600 605.600 553.300 600.600 583.300 595.300 600 594.600 620 596 643.300 598 713.300 597.600 741.600 594.300" fill="none" stroke="#111" strokeWidth="1.500" />
      <path d={rsi} fill="none" stroke="#7f0ec0" strokeWidth="1.600" strokeLinejoin="round" />
      <g fill="#7f0ec0" fontSize="8" fontWeight="700">
        <text transform="translate(664 619) rotate(-90)">edm</text>
        <text transform="translate(723 606) rotate(-90)">edm</text>
      </g>
      <path d="M661.500 600v26" stroke="#7f0ec0" strokeWidth=".6" strokeDasharray="1 3" />
    </g>
  </Plot>
);

const OscAxis = () => (
  <Plot aria-label="RSI">
    <g transform="translate(-1210 -551)" fontSize="7" fontWeight="600" fill="#333">
      <text x="1214" y="557">70,00000</text>
      <text x="1214" y="588">60,00000</text>
      <text x="1214" y="619" fontWeight="700">50,00000</text>
    </g>
  </Plot>
);

const dates: [number, string][] = [
  [73,'7'],[115,'9'],[149,'12'],[198,'15'],[239,'17'],[281,'21'],[322,'23'],[357,'26'],[405,'29'],[461,'Ago'],[509,'5'],[550,'7'],[592,'11'],[634,'13'],
  [668,'16'],[717,'19'],[758,'21'],[800,'25'],[841,'27'],[903,'Sep'],[945,'3'],[979,'6'],[1028,'9'],[1069,'11'],[1111,'15'],[1153,'17'],[1187,'20'],
];
const TimeAxis = () => (
  <Plot aria-label="Fecha">
    <g transform="translate(-37 -645)" fontSize="7" fontWeight="600" fill="#333" textAnchor="middle">
      {dates.map(([x, t]) => <text key={x} x={x} y="655.500" fontWeight={t.length === 3 ? 700 : 600}>{t}</text>)}
    </g>
  </Plot>
);

/* ---------- bottom bars ---------- */

const RangeBar = styled.footer`position: relative; height: 26px; flex: none; background: #fff; display: flex; align-items: center; padding: 0 6px 0 10px; gap: 6px; font-size: 9px;`;
const Range = styled.button`white-space: nowrap;`;
const Clock = styled.button`margin-left: auto; white-space: nowrap;`;
const Favorites = styled.div`
  position: absolute; left: 190px; top: -2px; width: 524px; height: 27px; background: #fff; border-radius: 4px; box-shadow: 0 1px 4px rgba(0, 0, 0, .25);
  display: flex; align-items: center;
`;
const Grip = styled.span`width: 17px; flex: none; display: flex; justify-content: center;`;
const Fav = styled.button`flex: 1; height: 25px; display: flex; align-items: center; justify-content: center;`;

const favs: { n: string; label: string; l?: string; y?: number }[] = [
  { n: 'brush', label: 'Pincel' }, { n: 'posFrame', label: 'Posición larga', l: 'L' }, { n: 'posFrame', label: 'Posición corta', l: 'S' },
  { n: 'rect', label: 'Rectángulo' }, { n: 'trend', label: 'Línea de tendencia' }, { n: 'fib', label: 'Retroceso de Fibonacci' },
  { n: 'up', label: 'Flecha arriba' }, { n: 'parallel', label: 'Canal paralelo' }, { n: 'down', label: 'Flecha abajo' }, { n: 'circle', label: 'Círculo' },
  { n: 'abc', label: 'Patrón ABCD', l: 'A  C', y: 5.5 }, { n: 'gridBox', label: 'Caja de Gann' }, { n: 'comment', label: 'Comentario' }, { n: 'table', label: 'Tabla' },
  { n: 'zig', label: 'Trayectoria' }, { n: 'fan', label: 'Resaltador' }, { n: 'profile', label: 'Perfil de volumen' }, { n: 'curve', label: 'Curva' },
  { n: 'pitch', label: 'Tridente' },
];

const Taskbar = styled.div`position: relative; height: 32px; flex: none; background: #11291f; overflow: hidden; display: flex; align-items: center; justify-content: center;`;
const Scene = styled.svg`position: absolute; inset: 0; width: 100%; height: 100%;`;
const Weather = styled.button`position: absolute; left: 12px; top: 5px; display: flex; align-items: center; gap: 5px; color: #0b1c12; font-size: 8px; line-height: 11px; text-align: left;`;
const Dock = styled.div`position: relative; display: flex; width: 588px;`;
const DockItem = styled.button<{ $on?: boolean }>`
  flex: 1; height: 28px; border-radius: 4px; display: flex; align-items: center; justify-content: center; background: ${p => (p.$on ? 'rgba(190,205,205,.5)' : 'transparent')};
`;
const Mic = styled.svg`position: absolute; right: 127px; top: 10px;`;

const disc = (fill: string, t: string, c: string, fs = 9) => (
  <>
    <circle cx="9" cy="9" r="7.500" fill={fill} />
    <text x="9" y="12" fontSize={fs} fontWeight="700" textAnchor="middle" fill={c}>{t}</text>
  </>
);
const tile = (fill: string, t: string, c: string, fs = 8, stroke = 'none') => (
  <>
    <rect x="1.500" y="1.500" width="15" height="15" rx="1" fill={fill} stroke={stroke} />
    <text x="9" y="12" fontSize={fs} fontWeight="700" textAnchor="middle" fill={c}>{t}</text>
  </>
);
const tvMark = 'M0 4.500h7.500v9H3.800V8H0zM13.500 4.500H18l-3.800 9H9.700zM10.300 4.500a1.800 1.800 0 1 1-.1 3.600 1.800 1.800 0 0 1 .1-3.600z';

const dock: { name: string; art: React.ReactNode; on?: boolean }[] = [
  { name: 'Inicio', art: <path d="M1 1h7.600v7.600H1zM9.400 1H17v7.600H9.400zM1 9.400h7.600V17H1zM9.400 9.400H17V17H9.400z" fill="#3fb0ee" /> },
  { name: 'Vista de tareas', art: <><rect x="4" y="2" width="13" height="12" fill="#e6e8ea" /><rect x="2" y="5" width="9" height="10" fill="#777c80" /></> },
  { name: 'Explorador', art: <><path d="M1 2.500h6l2 2h8v11H1z" fill="#f0b832" /><path d="M1 6.500h16v9H1z" fill="#fcd462" /><path d="M5 12h8v4H5z" fill="#2a7fc4" /></> },
  { name: 'Recortes', art: <><rect x="2" y="2" width="12" height="12" fill="#f1f1f3" /><path d="M4 4h7v7H4z" fill="none" stroke="#d33" strokeWidth="1.500" strokeDasharray="2 1" /><path d="m10 9 6 7M16 9l-6 7" stroke="#46a2d8" strokeWidth="2" /></> },
  { name: 'Notas', art: <><path d="M2 2h14v14H2z" fill="#2b2d2e" /><path d="M9 9h8l-5 7H9z" fill="#f9d62e" /></> },
  { name: 'Documentos', art: disc('#f2f6f8', 'd', '#5b7f9e', 11) },
  { name: 'Logitech G', art: disc('#0c0d0e', 'G', '#fff', 11) },
  { name: 'Disco', art: <><path d="M3 2h5v14H3zM9.500 2c9 0 9 14 0 14z" fill="#15191a" /></> },
  { name: 'OBS', art: <><circle cx="9" cy="9" r="7.500" fill="#23262a" stroke="#c9cdd0" /><path d="M9 4c3 1 3 5 0 5M13 12c-3 2-6-1-4-3M4.500 11c0-4 4-4 4.500-2" fill="none" stroke="#c9cdd0" strokeWidth="1.300" /><circle cx="14.500" cy="3.500" r="3.500" fill="#ee1c1c" /></> },
  { name: 'Zoom', art: disc('#1f63e6', 'zm', '#fff', 8) },
  { name: 'WhatsApp', art: <><rect x="1" y="2" width="15" height="15" rx="2" fill="#24cf5f" /><path d="M4 14l.8-2.800a4.800 4.800 0 1 1 2 1.900zM7 7c0 2 1.800 4 4 4" fill="none" stroke="#fff" strokeWidth="1.300" /><circle cx="14" cy="4" r="4" fill="#1c74c8" /><text x="14" y="6.500" fontSize="7" fill="#fff" textAnchor="middle">1</text></> },
  { name: 'Notion', art: tile('#f7f7f5', 'N', '#111', 11, '#111') },
  { name: 'Claude', art: <path d="M9 1.500v15M1.500 9h15M3.700 3.700l10.600 10.600M14.300 3.700 3.700 14.300" stroke="#d9725a" strokeWidth="2" /> },
  { name: 'Opera GX', art: tile('#120b0f', 'GX', '#e0244e', 8) },
  { name: 'TradingView', art: <><rect x="1" y="1" width="16" height="16" rx="2" fill="#0d0f12" /><path d={tvMark} fill="#fff" transform="translate(2.500 2.500) scale(.72)" /></>, on: true },
  { name: 'Zona', art: <><circle cx="9" cy="9" r="7.500" fill="#1bb5c5" /><path d="M5.500 5h7l-7 8h7" fill="none" stroke="#07373f" strokeWidth="2" /></> },
  { name: 'MetaTrader 5', art: <><path d="M9 1 17 6v6l-8 5-8-5V6z" fill="#173c30" /><text x="9" y="14" fontSize="14" fontWeight="700" textAnchor="middle" fill="#f3c319">5</text></> },
  { name: 'Moneda', art: <><circle cx="9" cy="9" r="6.500" fill="#e9c649" /><path d="M5 14V6.500h8V14M7 6.500V3.500h4v3" fill="#5a93b8" stroke="#efe9c4" /></> },
  { name: 'Valores', art: tile('#06282b', 'V', '#cfe9ea', 10) },
  { name: 'Otra', art: <path d="M9 3l3 5H6zM5 9l3 5H2zM13 9l3 5h-6z" fill="#0d1a18" stroke="#0a1210" /> },
];

/* ---------- page ---------- */

const tabs = [
  { s: 'EURUSD', f: 'eu' as const, p: '1,16907', d: '+0.11%', up: true, line: '#d9892b' },
  { s: 'GBPUSD', f: 'gb' as const, p: '1,36558', d: '+0.36%', up: true, line: '#4470c4' },
  { s: 'XAUUSD', f: 'xau' as const, p: '4.484,14', d: '−0.84%', up: false, line: '#bf2447' },
];
const intervals: [string, number][] = [['1m', 20], ['5m', 20], ['15m', 26], ['30m', 26], ['1h', 19], ['4h', 16], ['D', 15], ['S', 13], ['M', 14]];
const tools: [string, string][] = [
  ['trend', 'Línea de tendencia'], ['fib', 'Fibonacci'], ['xabcd', 'Patrones'], ['posFrame', 'Posición'], ['brush', 'Pincel'], ['text', 'Texto'], ['heart', 'Iconos'],
];
const green = '#26a269';
const red = '#cf3350';

export default function App() {
  return (
    <Page>
      <Global />
      <TabStrip>
        {tabs.map((t, i) => (
          <React.Fragment key={t.s}>
            <Tab $active={i === 0}>
              <TabInner $line={t.line}>
                <Flag kind={t.f} />
                <TabName href="#">{t.s}</TabName>
                <Arrow $c={t.up ? green : red}>{t.up ? '▲' : '▼'}</Arrow>
                <Quote $c="#444">{t.p}</Quote>
                <Quote $c={t.up ? green : red}>{t.d}</Quote>
                <Quote $c="#c4c4c6">/</Quote>
                <TabClose $w={16} $h={16} aria-label="Cerrar pestaña"><Glyph name="close" size={16} /></TabClose>
              </TabInner>
            </Tab>
            {i === 2 && <Divider />}
          </React.Fragment>
        ))}
        <IconButton $w={22} $c="#666" aria-label="Nueva pestaña"><Glyph name="plus" /></IconButton>
        <Spacer />
        <IconButton $w={34} $c="#777" aria-label="Paneles"><Glyph name="panels" /></IconButton>
        <Divider />
        <IconButton $w={34} $c="#555" aria-label="Más"><Glyph name="dots3" /></IconButton>
        <IconButton $w={34} aria-label="Minimizar"><Glyph name="minus" /></IconButton>
        <IconButton $w={32} aria-label="Restaurar"><Glyph name="restore" /></IconButton>
        <IconButton $w={34} aria-label="Cerrar"><Glyph name="close" /></IconButton>
      </TabStrip>

      <Toolbar>
        <Avatar aria-label="Perfil">San Ser<Badge>4</Badge></Avatar>
        <Symbol>EURUSD<Gem><Glyph name="gem" size={16} /></Gem></Symbol>
        <IconButton $w={31} aria-label="Comparar"><Glyph name="plusCircle" /></IconButton>
        <Divider $m={2} />
        {intervals.map(([t, w]) => <Interval key={t} $w={w} $on={t === '4h'}>{t}</Interval>)}
        <IconButton $w={16} aria-label="Intervalos"><Glyph name="chev" size={16} /></IconButton>
        <Divider $m={1} />
        <IconButton $w={27} aria-label="Línea"><Glyph name="line" /></IconButton>
        <IconButton $w={22} $h={22} $bg="#e9e9ea" aria-label="Velas"><Glyph name="candles" /></IconButton>
        <IconButton $w={29} aria-label="Perfil de velas"><Glyph name="candleList" /></IconButton>
        <IconButton $w={16} aria-label="Tipo de gráfico"><Glyph name="chev" size={16} /></IconButton>
        <Divider $m={5} />
        <Labelled $w={74}><Glyph name="indicators" />Indicadores</Labelled>
        <IconButton $w={18} aria-label="Favoritos"><Glyph name="chev" size={16} /></IconButton>
        <IconButton $w={24} aria-label="Plantillas"><Glyph name="grid4" /></IconButton>
        <Divider $m={4} />
        <Labelled $w={57}><Glyph name="alarm" />Alerta</Labelled>
        <Labelled $w={84}><Glyph name="rewind" />Reproducción</Labelled>
        <Divider $m={2} />
        <IconButton $w={26} aria-label="Deshacer"><Glyph name="undo" size={16} /></IconButton>
        <IconButton $w={24} $c="#a8a8ab" aria-label="Rehacer"><Glyph name="redo" size={16} /></IconButton>
        <Spacer />
        <IconButton $w={20} aria-label="Diseño"><Glyph name="square" /></IconButton>
        <LayoutName>Sin nombre<Save>Guardar</Save></LayoutName>
        <IconButton $w={20} aria-label="Diseños"><Glyph name="chev" size={16} /></IconButton>
        <Divider $m={1} />
        <IconButton $w={28} aria-label="Búsqueda rápida"><Glyph name="search" /></IconButton>
        <IconButton $w={24} aria-label="Ajustes"><Glyph name="hexGear" /></IconButton>
        <IconButton $w={26} aria-label="Pantalla completa"><Glyph name="full" /></IconButton>
        <IconButton $w={24} aria-label="Captura"><Glyph name="camera" /></IconButton>
        <Pill>Operar</Pill>
        <Pill $dark>Publicar</Pill>
      </Toolbar>

      <Body>
        <Rail $side="left">
          <Cursor $w={23} $h={23} $bg="#ececed" aria-label="Cursor"><Glyph name="cross" /></Cursor>
          {tools.map(([n, l]) => (
            <IconButton key={n} $w={25} $h={25} aria-label={l}><Glyph name={n} letter={n === 'posFrame' ? 'L' : undefined} /></IconButton>
          ))}
          <RailRule />
          <IconButton $w={25} $h={25} aria-label="Medir"><Glyph name="ruler" /></IconButton>
          <IconButton $w={25} $h={25} aria-label="Acercar"><Glyph name="zoom" /></IconButton>
          <RailRule />
          <IconButton $w={25} $h={25} aria-label="Imán"><Glyph name="magnet" /></IconButton>
          <IconButton $w={23} $h={25} $bg="#262629" $c="#fff" aria-label="Seguir dibujando"><Glyph name="pencilLock" /></IconButton>
          <IconButton $w={25} $h={25} aria-label="Bloquear"><Glyph name="unlock" /></IconButton>
          <IconButton $w={25} $h={25} aria-label="Ocultar"><Glyph name="eye" /></IconButton>
          <RailRule />
          <IconButton $w={25} $h={25} aria-label="Eliminar"><Glyph name="trash" /></IconButton>
          <Spacer />
          <IconButton $w={23} $h={23} $bg="#262629" $c="#fff" aria-label="Favoritos"><Glyph name="star" /></IconButton>
        </Rail>

        <Centre>
          <ChartGrid>
            <Cell $rule>
              <PricePane />
              <Legend><Flag kind="eu" />EURUSD · 4h · OANDA<Approx>≈</Approx></Legend>
              <Fold aria-label="Contraer leyenda"><Glyph name="chev" size={14} w={1.4} /></Fold>
              <Banner>ALGO -LIT<BannerSub>Timing | Liquidity | MSU</BannerSub></Banner>
              <Stamp>20/8/2026<br />EURUSD | 240M</Stamp>
              <Extreme>Máximo</Extreme>
              <Extreme $bottom>Mínimo</Extreme>
              <Overlay><EventLayer /></Overlay>
            </Cell>
            <Cell $axis $rule>
              <Currency aria-label="Divisa" defaultValue="USD"><option>USD</option></Currency>
              <CurrencyChev><Glyph name="chev" size={10} w={2} /></CurrencyChev>
              <PriceAxis />
              <ScaleMode><button>A</button><button>L</button></ScaleMode>
            </Cell>
            <Cell $rule>
              <Oscillator />
              <Brand>
                <svg width="20" height="20" viewBox="0 0 18 18" aria-hidden="true"><path d={tvMark} fill="#141416" stroke="#fff" strokeWidth="1" paintOrder="stroke" /></svg>
                TradingView
              </Brand>
            </Cell>
            <Cell $axis $rule><OscAxis /><ScaleMode><button>A</button><button>L</button></ScaleMode></Cell>
            <Cell><TimeAxis /></Cell>
            <Cell $axis><AxisGear aria-label="Ajustes de escala"><Glyph name="hexGear" size={12} w={1.4} /></AxisGear></Cell>
          </ChartGrid>
          <RangeBar>
            {['1D', '5D', '1M', '3M', '6M', 'YTD', '1A', '5A', 'Todos'].map(r => <Range key={r}>{r}</Range>)}
            <Clock>07:14:05 AM UTC-4</Clock>
            <Favorites>
              <Grip>
                <svg width="6" height="10" viewBox="0 0 6 10" aria-hidden="true"><path d="M1 0v10M5 0v10" stroke="#aaa" strokeDasharray="1 3" /></svg>
              </Grip>
              <Fav aria-label="Punto"><svg width="18" height="18" viewBox="0 0 18 18" aria-hidden="true"><circle cx="9" cy="9" r="2" fill="#111" /></svg></Fav>
              {favs.map(f => (
                <Fav key={f.label} aria-label={f.label}><Glyph name={f.n} letter={f.l} letterY={f.y} /></Fav>
              ))}
            </Favorites>
          </RangeBar>
        </Centre>

        <Rail $side="right">
          <RailItem aria-label="Lista de seguimiento"><Glyph name="bookList" /></RailItem>
          <RailItem aria-label="Alertas"><Glyph name="clock" /><Badge $wide>45</Badge></RailItem>
          <RailItem aria-label="Capas"><Glyph name="layers" /></RailItem>
          <RailItem aria-label="Chat"><Glyph name="chat" /></RailItem>
          <Spacer />
          <RailItem aria-label="Radar"><Glyph name="radar" size={20} /></RailItem>
          <RailItem aria-label="Ideas"><Glyph name="idea" /></RailItem>
          <RailItem aria-label="Calendario"><Glyph name="calendar" /></RailItem>
          <RailItem aria-label="Noticias"><Glyph name="feed" /><Badge $wide>99+</Badge></RailItem>
          <RailItem aria-label="Notificaciones"><Glyph name="bell" /></RailItem>
          <RailItem aria-label="Aplicaciones">
            <Apps><svg width="12" height="12" viewBox="0 0 12 12" aria-hidden="true"><path d="M0 1.500h12M0 6h12M0 10.500h12" stroke="#fff" strokeWidth="3" strokeDasharray="3 1.500" /></svg></Apps>
          </RailItem>
          <RailRule />
          <RailItem aria-label="Ayuda"><Glyph name="help" size={20} /></RailItem>
        </Rail>
      </Body>

      <Taskbar>
        <Scene viewBox="0 0 1280 32" preserveAspectRatio="none" aria-hidden="true">
          <defs>
            <linearGradient id="road"><stop offset="0" stopColor="#2d5551" /><stop offset=".35" stopColor="#2a4847" /><stop offset=".5" stopColor="#3b3a3c" /><stop offset=".7" stopColor="#1c3335" /><stop offset="1" stopColor="#164440" /></linearGradient>
            <linearGradient id="grass"><stop offset="0" stopColor="#0b3320" /><stop offset=".12" stopColor="#1d3a1c" /><stop offset=".2" stopColor="#16261a" /><stop offset=".85" stopColor="#132419" /><stop offset="1" stopColor="#04171c" /></linearGradient>
            <filter id="grain"><feTurbulence type="fractalNoise" baseFrequency=".5" numOctaves="2" /><feColorMatrix values="0 0 0 0 0  0 0 0 0 0  0 0 0 0 0  .9 0 0 0 -.2" /></filter>
          </defs>
          <path d="M0 0h1280v32H0z" fill="url(#grass)" />
          <path d="M262 0h764l72 32H186z" fill="url(#road)" />
          <path d="M252 0h10l-76 32h-14z" fill="#66776a" />
          <path d="M1022 0h5l72 32h-8z" fill="#4c7d72" />
          <path d="M622 0h24l-8 32h-16z" fill="#82462b" opacity=".7" />
          <path d="M428 0h14l4 5-10-2zM452 0q5 9 11 0zM690 0q-2 16 10 18 12-6 9-18" fill="none" stroke="#c9b079" strokeWidth="2" />
          <path d="M0 0h1280v32H0z" filter="url(#grain)" opacity=".35" />
        </Scene>
        <Weather>
          <svg width="18" height="16" viewBox="0 0 18 16" aria-hidden="true"><circle cx="12" cy="5.500" r="4.500" fill="#f5a233" /><path d="M4 15a3.500 3.500 0 0 1-.5-7 5 5 0 0 1 9 0A3.500 3.500 0 0 1 13.500 15z" fill="#dfe7f3" /></svg>
          <span>27°C<br />Mayorm. nublado</span>
        </Weather>
        <Dock>
          {dock.map(d => (
            <DockItem key={d.name} $on={d.on} aria-label={d.name}>
              <svg width="18" height="18" viewBox="0 0 18 18" aria-hidden="true">{d.art}</svg>
            </DockItem>
          ))}
        </Dock>
        <Mic width="10" height="12" viewBox="0 0 10 12" fill="none" stroke="#1c4a8a"><rect x="3.500" y=".5" width="3" height="6" rx="1.500" /><path d="M1.500 5c0 5 7 5 7 0M5 9v2.500" /></Mic>
      </Taskbar>
    </Page>
  );
}
